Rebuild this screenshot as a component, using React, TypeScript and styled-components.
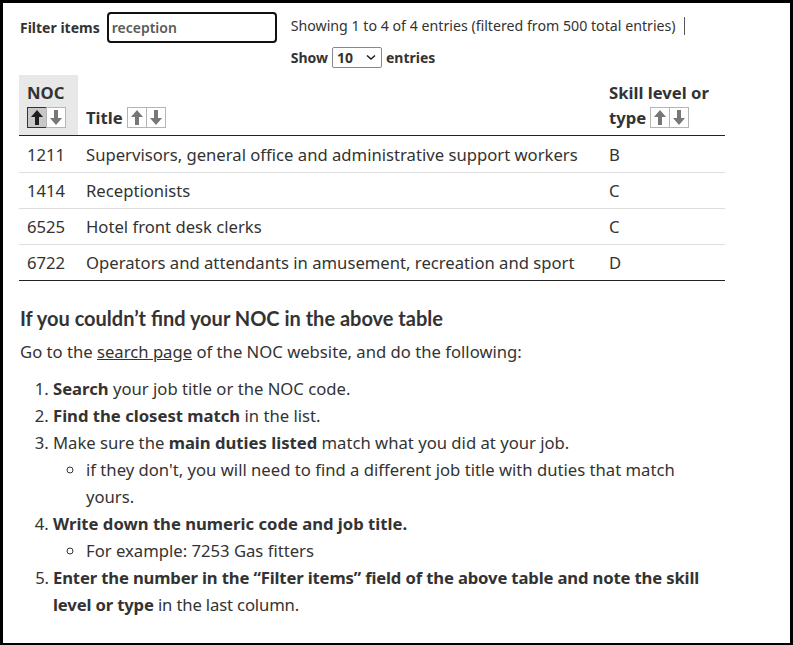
import React from "react";
import styled, { createGlobalStyle } from "styled-components";

const Global = createGlobalStyle`
  html, body { margin: 0; padding: 0; background: #fff; }
  body { font-family: "Noto Sans", "Open Sans", sans-serif; color: #333; }
  * { box-sizing: border-box; }
`;

const Frame = styled.div`
  width: 793px;
  height: 645px;
  border: 3px solid #000;
  border-bottom-width: 2px;
  overflow: hidden;
  padding: 9px 65px 0 16px;
  background: #fff;
`;

const FilterBar = styled.div`
  display: flex;
  align-items: flex-start;
  padding-left: 1px;
`;

const FilterLabel = styled.label`
  font-size: 14px;
  font-weight: 700;
  line-height: 20px;
  margin-top: 6px;
  margin-right: 7px;
`;

const FilterInput = styled.div`
  width: 170px;
  height: 31px;
  border: 2px solid #111;
  border-radius: 4px;
  padding: 0 3px;
  font-size: 14px;
  font-weight: 600;
  color: #5a5a5a;
  line-height: 27px;
  flex-shrink: 0;
`;

const InfoCol = styled.div`
  display: flex;
  flex-direction: column;
  margin-left: 14px;
  gap: 9px;
  white-space: nowrap;
`;

const InfoText = styled.div`
  font-size: 14.2px;
  line-height: 22px;
  margin-top: 3px;
  display: flex;
  align-items: center;
`;

const Caret = styled.span`
  display: inline-block;
  width: 1px;
  height: 18px;
  background: #555;
  margin-left: 8px;
`;

const ShowRow = styled.div`
  display: flex;
  align-items: center;
  gap: 4px;
  font-size: 14px;
  font-weight: 700;
  margin-top: 1px;
`;

const SelectBox = styled.div`
  width: 50px;
  height: 21px;
  border: 1px solid #888;
  border-radius: 2px;
  display: flex;
  align-items: center;
  justify-content: space-between;
  padding: 0 5px 0 4px;
  font-size: 14px;
  font-weight: 700;
`;

const Table = styled.table`
  width: 706px;
  border-collapse: collapse;
  margin-top: 7px;
  font-size: 16.67px;
  table-layout: fixed;
`;

const Th = styled.th<{ $active?: boolean }>`
  text-align: left;
  vertical-align: bottom;
  font-weight: 700;
  line-height: 25px;
  padding: 5px 4px 5px 8px;
  background: ${(p) => (p.$active ? "#e8e8e8" : "transparent")};
  border-bottom: 1px solid #222;
`;

const HeadLine = styled.div`
  display: flex;
  align-items: center;
  height: 25px;
  white-space: nowrap;
`;

const Td = styled.td`
  padding: 6px 4px 5px 8px;
  line-height: 24px;
  border-bottom: 1px solid #ddd;
  white-space: nowrap;
`;

const Tr = styled.tr`
  &:first-child td { padding-top: 7px; }
  &:last-child td { border-bottom: 1px solid #222; }
`;

const SortGroup = styled.span<{ $gap?: number }>`
  display: inline-flex;
  margin-left: ${(p) => p.$gap ?? 0}px;
`;

const SortBtn = styled.span<{ $active?: boolean }>`
  width: 20px;
  height: 21px;
  display: inline-flex;
  align-items: center;
  justify-content: center;
  border: 1px solid ${(p) => (p.$active ? "#333" : "#b5b5b5")};
  background: ${(p) => (p.$active ? "#c8c8c8" : "#fff")};
  & + & { margin-left: -1px; }
`;

const Heading = styled.h2`
  font-family: Lato, "Noto Sans", sans-serif;
  font-size: 20px;
  font-weight: 700;
  margin: 25px 0 0 1px;
  line-height: 24px;
`;

const Para = styled.p`
  font-size: 16.67px;
  line-height: 24px;
  margin: 10px 0 0 1px;
`;

const Link = styled.a`
  color: #333;
  text-decoration: underline;
`;

const OList = styled.ol`
  margin: 11px 0 0 0;
  padding-left: 34px;
  font-size: 16.67px;
  line-height: 27px;
`;

const SubList = styled.ul`
  list-style: circle;
  margin: 0;
  padding-left: 33px;
`;

const Tight = styled.li`
  letter-spacing: -0.15px;
`;

const Arrow = ({ dir, dark }: { dir: "up" | "down"; dark?: boolean }) => (
  <svg width="14" height="17" viewBox="0 0 14 17">
    <path
      d={dir === "up" ? "M7 1 L13 8 L9 8 L9 16 L5 16 L5 8 L1 8 Z" : "M7 16 L13 9 L9 9 L9 1 L5 1 L5 9 L1 9 Z"}
      fill={dark ? "#1e1e1e" : "#777"}
    />
  </svg>
);

const Sort = ({ active, gap }: { active?: boolean; gap?: number }) => (
  <SortGroup $gap={gap}>
    <SortBtn $active={active}>
      <Arrow dir="up" dark={active} />
    </SortBtn>
    <SortBtn>
      <Arrow dir="down" />
    </SortBtn>
  </SortGroup>
);

const rows = [
  ["1211", "Supervisors, general office and administrative support workers", "B"],
  ["1414", "Receptionists", "C"],
  ["6525", "Hotel front desk clerks", "C"],
  ["6722", "Operators and attendants in amusement, recreation and sport", "D"],
];

export default function App() {
  return (
    <>
      <Global />
      <Frame>
        <FilterBar>
          <FilterLabel>Filter items</FilterLabel>
          <FilterInput>reception</FilterInput>
          <InfoCol>
            <InfoText>
              Showing 1 to 4 of 4 entries (filtered from 500 total entries)
              <Caret />
            </InfoText>
            <ShowRow>
              Show
              <SelectBox>
                10
                <svg width="10" height="7" viewBox="0 0 10 7">
                  <path d="M1 1.5 L5 5 L9 1.5" stroke="#222" strokeWidth="1.6" fill="none" />
                </svg>
              </SelectBox>
              entries
            </ShowRow>
          </InfoCol>
        </FilterBar>
        <Table>
          <colgroup>
            <col style={{ width: 59 }} />
            <col />
            <col style={{ width: 124 }} />
          </colgroup>
          <thead>
            <tr>
              <Th $active>
                <HeadLine>NOC</HeadLine>
                <HeadLine>
                  <Sort active gap={0} />
                </HeadLine>
              </Th>
              <Th>
                <HeadLine>
                  Title
                  <Sort gap={4} />
                </HeadLine>
              </Th>
              <Th>
                <HeadLine>Skill level or</HeadLine>
                <HeadLine>
                  type
                  <Sort gap={4} />
                </HeadLine>
              </Th>
            </tr>
          </thead>
          <tbody>
            {rows.map((r) => (
              <Tr key={r[0]}>
                <Td>{r[0]}</Td>
                <Td>{r[1]}</Td>
                <Td>{r[2]}</Td>
              </Tr>
            ))}
          </tbody>
        </Table>
        <Heading>If you couldn’t find your NOC in the above table</Heading>
        <Para>
          Go to the <Link href="#">search page</Link> of the NOC website, and do the following:
        </Para>
        <OList>
          <li>
            <b>Search</b> your job title or the NOC code.
          </li>
          <li>
            <b>Find the closest match</b> in the list.
          </li>
          <li>
            Make sure the <b>main duties listed</b> match what you did at your job.
            <SubList>
              <li>if they don't, you will need to find a different job title with duties that match yours.</li>
            </SubList>
          </li>
          <li>
            <b>Write down the numeric code and job title.</b>
            <SubList>
              <li>For example: 7253 Gas fitters</li>
            </SubList>
          </li>
          <Tight>
            <b>Enter the number in the “Filter items” field of the above table and note the skill level or type</b> in
            the last column.
          </Tight>
        </OList>
      </Frame>
    </>
  );
}
